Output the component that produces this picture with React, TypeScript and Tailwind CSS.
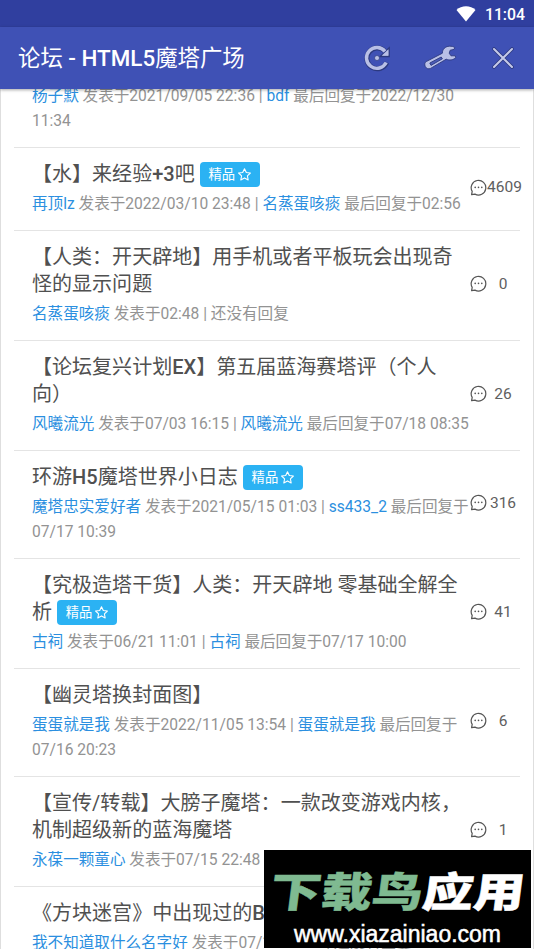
import React from "react";

type Post = {
  title?: string[];
  featured?: boolean;
  author: string;
  posted: string;
  replier?: string;
  replied?: string[];
  count?: number;
};

const posts: Post[] = [
  { author: "杨子默", posted: "2021/09/05 22:36", replier: "bdf", replied: ["最后回复于2022/12/30", "11:34"] },
  { title: ["【水】来经验+3吧"], featured: true, author: "再顶lz", posted: "2022/03/10 23:48", replier: "名蒸蛋咳痰", replied: ["最后回复于02:56"], count: 4609 },
  { title: ["【人类：开天辟地】用手机或者平板玩会出现奇", "怪的显示问题"], author: "名蒸蛋咳痰", posted: "02:48", count: 0 },
  { title: ["【论坛复兴计划EX】第五届蓝海赛塔评（个人", "向）"], author: "风曦流光", posted: "07/03 16:15", replier: "风曦流光", replied: ["最后回复于07/18 08:35"], count: 26 },
  { title: ["环游H5魔塔世界小日志"], featured: true, author: "魔塔忠实爱好者", posted: "2021/05/15 01:03", replier: "ss433_2", replied: ["最后回复于", "07/17 10:39"], count: 316 },
  { title: ["【究极造塔干货】人类：开天辟地 零基础全解全", "析"], featured: true, author: "古祠", posted: "06/21 11:01", replier: "古祠", replied: ["最后回复于07/17 10:00"], count: 41 },
  { title: ["【幽灵塔换封面图】"], author: "蛋蛋就是我", posted: "2022/11/05 13:54", replier: "蛋蛋就是我", replied: ["最后回复于", "07/16 20:23"], count: 6 },
  { title: ["【宣传/转载】大膀子魔塔：一款改变游戏内核，", "机制超级新的蓝海魔塔"], author: "永葆一颗童心", posted: "07/15 22:48", count: 1 },
  { title: ["《方块迷宫》中出现过的B"], author: "我不知道取什么名字好", posted: "07/14 22:11" },
];

export default function App() {
  return (
    <div className="relative flex h-[949px] w-[534px] flex-col overflow-hidden bg-white font-['Roboto','Noto_Sans_CJK_SC',sans-serif]">
      <StatusBar />
      <TopBar />
      <main lang="zh-CN" className="min-h-0 flex-1 overflow-hidden border-x border-[#dedede] px-[13px]">
        <ul className="-mt-[22px]">
          {posts.map((p) => (
            <PostRow key={p.author + p.posted} post={p} />
          ))}
        </ul>
      </main>
      <Watermark />
    </div>
  );
}

// latin runs are medium weight, chinese stays regular
function Mixed({ text }: { text: string }) {
  return (
    <>
      {text.split(/([A-Za-z0-9+-]+)/).map((part, i) =>
        i % 2 ? <span key={i} className="font-medium">{part}</span> : part
      )}
    </>
  );
}

function StatusBar() {
  return (
    <div className="flex h-[27px] shrink-0 items-center justify-end gap-[9px] bg-[#303f9f] pr-[9px] text-white">
      <svg width="20" height="16" viewBox="0 0 20 16" fill="currentColor">
        <path d="M10 15.5 0.5 4C3 1.6 6.4 0.3 10 0.3S17 1.6 19.5 4Z" />
      </svg>
      <span className="pt-[2px] text-[15.8px] font-medium leading-none">11:04</span>
    </div>
  );
}

function TopBar() {
  return (
    <header className="relative z-10 flex h-[62px] shrink-0 items-center bg-[#3f51b5] pl-[18px] pr-[20.5px] shadow-[0_1px_3px_rgba(0,0,0,0.35)]">
      <h1 lang="zh-CN" className="flex-1 whitespace-nowrap pt-0.5 text-[22.4px] text-white">
        <Mixed text="论坛 - HTML5魔塔广场" />
      </h1>
      <div className="flex items-center">
        {/* refresh */}
        <svg className="mr-[33px]" width="28" height="28" viewBox="0 0 28 28" fill="none">
          <path d="M23.8 18.6A10.4 10.4 0 1 1 21.4 6.8" stroke="#2c397f" strokeWidth="5" />
          <path d="M26 4.2V12.4H17.6Z" fill="#b9c0e6" stroke="#2c397f" strokeWidth="1.6" />
          <path d="M23.2 18.6A10.4 10.4 0 1 1 22 7.4" stroke="#b9c0e6" strokeWidth="3.4" />
          <path d="M25.5 5.2V11.8H18.6Z" fill="#b9c0e6" />
          <circle cx="14" cy="14" r="2.5" fill="#b9c0e6" stroke="#2c397f" strokeWidth="0.7" />
        </svg>
        {/* wrench */}
        <svg className="mr-[35px]" width="33" height="26" viewBox="0 0 33 26" fill="none">
          <path
            d="M2.2 16.6 18.4 8.2C18.2 4.4 21.2 1.4 25.4 1.2 27.6 1.1 29.5 1.6 30.8 2.6L30 4.4 26.2 5.2 25.2 8.2 27 10.8 31.2 10.8 31.8 12.6C29.2 15.2 25.4 15.6 22.2 14.2L6.6 23.4C4.4 24.5 2.3 23.6 1.3 21.6.4 19.6.5 17.7 2.2 16.6Z"
            fill="#b9c0e6"
            stroke="#2c397f"
            strokeWidth="0.9"
            strokeLinejoin="round"
          />
          <path d="M5.8 18 17.2 12 18.4 13.8 7 20.4Z" fill="#4a5bb6" stroke="#2c397f" strokeWidth="0.9" />
        </svg>
        {/* close */}
        <svg width="22" height="22" viewBox="0 0 22 22" strokeLinecap="round">
          <path d="M2 2 20 20M20 2 2 20" stroke="#2c397f" strokeWidth="3.6" />
          <path d="M2 2 20 20M20 2 2 20" stroke="#c5cae9" strokeWidth="2" />
        </svg>
      </div>
    </header>
  );
}

function PostRow({ post }: { post: Post }) {
  const { title, featured, author, posted, replier, replied, count } = post;
  return (
    <li className="flex items-center border-b border-[#e4e4e4] pb-[13.5px] pl-[18px] pt-[12.5px]">
      <div className="w-[438px] shrink-0 whitespace-nowrap">
        <h2 className="text-[20.05px] font-normal leading-[27px] text-[#505050]">
          {title?.map((line, i) => (
            <div key={line} className="flex h-[27px] items-center">
              <span><Mixed text={line} /></span>
              {featured && i === title.length - 1 && <Badge />}
            </div>
          ))}
        </h2>
        <p className="mt-1 text-[15.58px] leading-[25px] text-[#939393]">
          <a className="text-[#2b8fe0]">{author}</a> 发表于{posted} |{" "}
          {replier && <a className="text-[#2b8fe0]">{replier}</a>}
          {replier && " "}
          {replied?.[0] ?? "还没有回复"}
          {replied?.[1] && <span className="block">{replied[1]}</span>}
        </p>
      </div>
      {count !== undefined && (
        <div className="mb-[3px] flex shrink-0 items-center text-[15.5px] text-[#606060]">
          <CommentIcon />
          <span className="flex min-w-[32px] justify-center pt-[2px]">{count}</span>
        </div>
      )}
    </li>
  );
}

function Badge() {
  return (
    <span className="ml-[5px] flex h-[25px] w-[60px] items-center justify-center gap-[3px] rounded-[4px] bg-[#2bb2f3] text-[13.3px] font-normal text-white">
      精品
      <svg width="13" height="13" viewBox="0 0 13 13" fill="none" stroke="currentColor" strokeWidth="1.1" strokeLinejoin="round">
        <path d="M6.5.7 8.3 4.5 12.4 5 9.4 7.8 10.2 12 6.5 9.9 2.8 12 3.6 7.8.6 5 4.7 4.5Z" />
      </svg>
    </span>
  );
}

function CommentIcon() {
  return (
    <svg width="17" height="17" viewBox="0 0 17 17" fill="none">
      <path d="M2.2 12.4A7.3 7.3 0 1 1 5 15.1L1.6 15.7Z" stroke="#555" strokeWidth="1.2" strokeLinejoin="round" />
      <g fill="#555">
        <circle cx="5.2" cy="8.4" r="0.8" />
        <circle cx="8.5" cy="8.4" r="0.8" />
        <circle cx="11.8" cy="8.4" r="0.8" />
      </g>
    </svg>
  );
}

function Watermark() {
  return (
    <div lang="zh-CN" className="absolute bottom-px right-[3px] z-20 flex h-[98px] w-[267px] flex-col items-center bg-black">
      <div className="mt-[22px] h-[42px] origin-center -skew-x-6 scale-x-[1.24] whitespace-nowrap text-[41px] font-black leading-[42px] text-white [-webkit-text-stroke:0.5px_currentColor]">
        <span className="text-[#7fba91]">下载鸟</span>应用
      </div>
      <div className="mt-[7px] font-['Liberation_Sans',sans-serif] text-[23px] leading-[26px] text-white [-webkit-text-stroke:0.5px_currentColor]">
        www.xiazainiao.com
      </div>
    </div>
  );
}
